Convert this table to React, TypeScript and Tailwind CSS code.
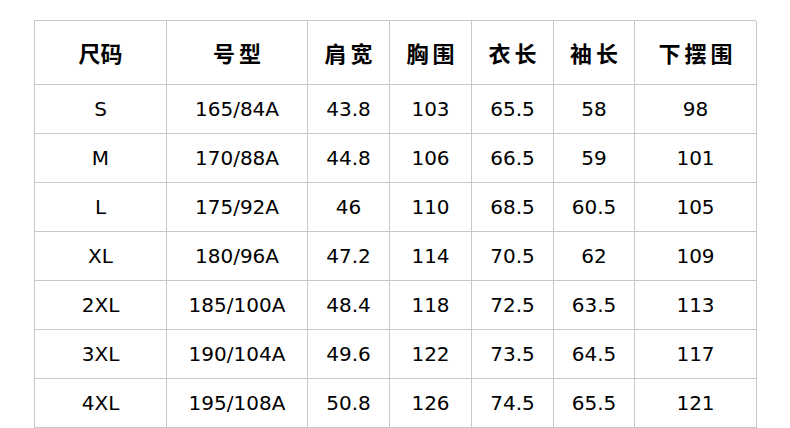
import React from "react";

const headers = ["尺码", "号型", "肩宽", "胸围", "衣长", "袖长", "下摆围"];
const rows = [
  ["S", "165/84A", "43.8", "103", "65.5", "58", "98"],
  ["M", "170/88A", "44.8", "106", "66.5", "59", "101"],
  ["L", "175/92A", "46", "110", "68.5", "60.5", "105"],
  ["XL", "180/96A", "47.2", "114", "70.5", "62", "109"],
  ["2XL", "185/100A", "48.4", "118", "72.5", "63.5", "113"],
  ["3XL", "190/104A", "49.6", "122", "73.5", "64.5", "117"],
  ["4XL", "195/108A", "50.8", "126", "74.5", "65.5", "121"],
];

export default function App() {
  return (
    <div className="w-[790px] h-[428px] bg-white overflow-hidden">
      <div className="ml-[34px] mt-[20px] w-[722px] border-l border-t border-[#c8c8c8] grid grid-cols-[132px_141px_82px_82px_82px_81px_122px]">
        {headers.map((h, i) => (
          <div
            key={h}
            className={`h-[64px] border-r border-b border-[#c8c8c8] flex items-center justify-center text-[22px] font-bold text-black ${i === 0 ? "tracking-[0px]" : "tracking-[4px] pl-[4px]"}`}
            style={{ fontFamily: '"Noto Sans CJK SC", "Noto Sans", sans-serif' }}
          >
            {h}
          </div>
        ))}
        {rows.map((r, ri) =>
          r.map((c, ci) => (
            <div
              key={`${ri}-${ci}`}
              className="h-[49px] border-r border-b border-[#c8c8c8] flex items-center justify-center text-[20px] text-black"
              style={{ fontFamily: '"DejaVu Sans", sans-serif' }}
            >
              {c}
            </div>
          ))
        )}
      </div>
    </div>
  );
}
